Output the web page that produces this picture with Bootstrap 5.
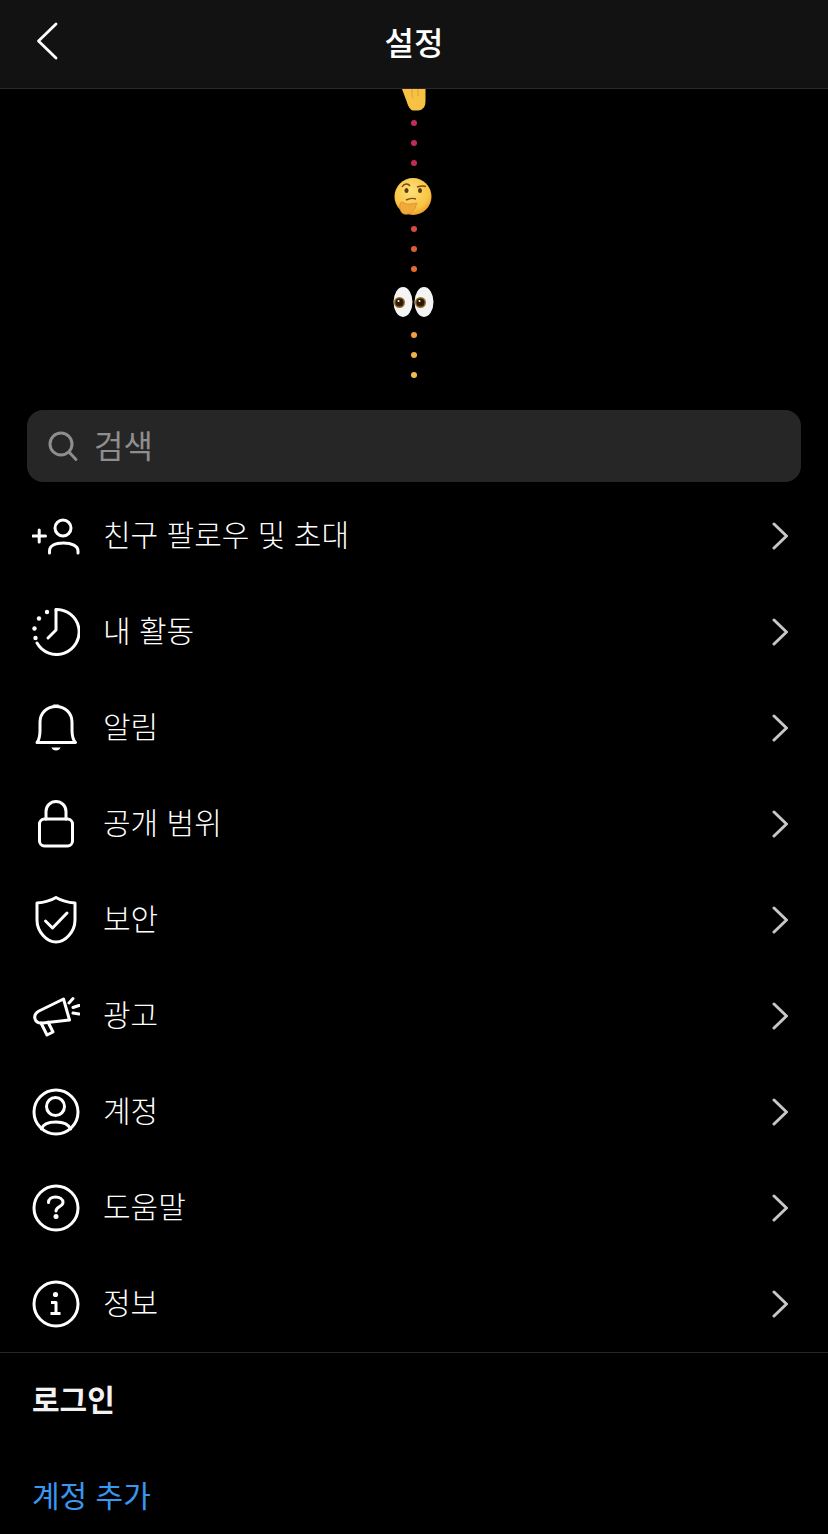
<!DOCTYPE html>
<html lang="ko">
<head>
    <meta charset="UTF-8">
    <meta name="viewport" content="width=device-width, initial-scale=1.0">
    <title>설정</title>
    <link href="https://cdn.jsdelivr.net/npm/bootstrap@5.3.0/dist/css/bootstrap.min.css" rel="stylesheet">
    <style>
        body {
            font-family: "Noto Sans CJK KR", "Noto Sans", sans-serif;
            background-color: #000;
            color: #fff;
            width: 828px;
            height: 1534px;
            overflow: hidden;
        }
        .top-bar {
            height: 89px;
            padding: 0 36px 6px;
            background-color: #121212;
            border-bottom: 1px solid #2a2a2a;
        }
        .top-title {
            font-size: 32px;
            font-weight: 500;
            line-height: 44px;
            margin: 0;
        }
        .hero-strip {
            height: 321px;
            overflow: hidden;
        }
        .hero-dots {
            gap: 14px;
        }
        .hero-dot {
            width: 6px;
            height: 6px;
            border-radius: 50%;
        }
        .hero-hand {
            margin-bottom: 9px;
        }
        .hero-think {
            margin: 11px 0 9px;
        }
        .hero-eyes {
            margin: 14px 0;
        }
        .search-box {
            height: 72px;
            margin: 0 27px 6px;
            padding: 0 0 5px 20px;
            gap: 15px;
            background-color: #262626;
            border-radius: 16px;
            color: #8e8e8e;
            font-size: 32px;
        }
        .search-box svg {
            margin-top: 5px;
        }
        .settings-list {
            --bs-list-group-bg: transparent;
            --bs-list-group-color: #fff;
            --bs-list-group-border-width: 0;
            --bs-list-group-item-padding-x: 32px;
            --bs-list-group-item-padding-y: 0;
        }
        .setting-row {
            height: 96px;
            gap: 23px;
            font-size: 30px;
            font-weight: 300;
            padding-right: 39px;
        }
        .setting-row svg {
            flex-shrink: 0;
        }
        .setting-label {
            flex-grow: 1;
            line-height: 44px;
            margin-bottom: 6px;
        }
        .login-zone {
            border-top: 1px solid #262626;
        }
        .login-row {
            height: 96px;
            padding: 0 32px 6px;
        }
        .login-head {
            font-size: 30px;
            font-weight: 700;
            color: #f2f2f2;
            margin: 0;
        }
        .login-add {
            font-size: 30px;
            color: #3897f0;
            text-decoration: none;
        }
        .ico {
            fill: none;
            stroke: #fff;
            stroke-width: 3;
            stroke-linecap: round;
            stroke-linejoin: round;
        }
        .ico-fill {
            fill: #fff;
            stroke: none;
        }
    </style>
</head>
<body>
    <header class="top-bar d-flex align-items-center justify-content-between">
        <svg width="24" height="40" viewBox="0 0 24 40"><path class="ico" d="M20 3 L2.5 20 L20 37" style="stroke-width:2.8"/></svg>
        <h1 class="top-title">설정</h1>
        <div style="width:24px"></div>
    </header>

    <div class="hero-strip d-flex flex-column align-items-center">
        <svg class="hero-hand" width="24" height="22" viewBox="0 0 24 22">
            <path d="M0 0 H23.5 V12 C23.5 18 21 21 16 21.5 H11 C8 21 6 17 4.5 12 Z" fill="#f7c244"/>
            <path d="M10 0 C9.5 4 10 7 11 9 M16 0 V7" stroke="#e09f2c" stroke-width="1" fill="none"/>
        </svg>
        <div class="hero-dots d-flex flex-column">
            <i class="hero-dot" style="background:#c32a62"></i>
            <i class="hero-dot" style="background:#c22b5c"></i>
            <i class="hero-dot" style="background:#c02c55"></i>
        </div>
        <svg class="hero-think" width="40" height="40" viewBox="0 0 40 40">
            <defs>
                <radialGradient id="faceGrad" cx="45%" cy="35%" r="70%">
                    <stop offset="0" stop-color="#fde07a"/>
                    <stop offset="0.7" stop-color="#f9c443"/>
                    <stop offset="1" stop-color="#e9932a"/>
                </radialGradient>
            </defs>
            <circle cx="19" cy="19.5" r="18.5" fill="url(#faceGrad)"/>
            <path d="M8 10 C10 6.5 14 6 16 9" fill="none" stroke="#7a4a12" stroke-width="1.4"/>
            <path d="M23 10 C26 9 29 8.5 32 9.5" fill="none" stroke="#7a4a12" stroke-width="1.4"/>
            <ellipse cx="12.5" cy="13.5" rx="2" ry="2.6" fill="#5a3a10"/>
            <ellipse cx="26" cy="13.5" rx="2" ry="2.6" fill="#5a3a10"/>
            <path d="M12 23 C16 21 19 21 22 22" fill="none" stroke="#7a4a12" stroke-width="1.4"/>
            <path d="M6 27 C7 24 9 25 10 26 C13 28 18 27 22 26 C24 26 23 28 21 29 C23 30 21 32 19 33 C18 36 14 38 10 37 C7 36 5 32 6 27 Z" fill="#f2a93b" stroke="#d98a25" stroke-width="0.7"/>
        </svg>
        <div class="hero-dots d-flex flex-column">
            <i class="hero-dot" style="background:#d64a3f"></i>
            <i class="hero-dot" style="background:#df5d36"></i>
            <i class="hero-dot" style="background:#e56b2e"></i>
        </div>
        <svg class="hero-eyes" width="42" height="32" viewBox="0 0 42 32">
            <ellipse cx="10" cy="16" rx="9.5" ry="15" fill="#f4f4f4"/>
            <ellipse cx="31" cy="16" rx="9.5" ry="15" fill="#f4f4f4"/>
            <circle cx="6.5" cy="16.5" r="5.5" fill="#9a6c1e"/>
            <circle cx="6.5" cy="16.5" r="4" fill="#2b1a0c"/>
            <circle cx="5.5" cy="15" r="1" fill="#fff"/>
            <circle cx="27.5" cy="16.5" r="5.5" fill="#9a6c1e"/>
            <circle cx="27.5" cy="16.5" r="4" fill="#2b1a0c"/>
            <circle cx="26.5" cy="15" r="1" fill="#fff"/>
        </svg>
        <div class="hero-dots d-flex flex-column">
            <i class="hero-dot" style="background:#ee9f3f"></i>
            <i class="hero-dot" style="background:#efb04a"></i>
            <i class="hero-dot" style="background:#f2bc52"></i>
        </div>
    </div>

    <div class="search-box d-flex align-items-center">
        <svg width="32" height="32" viewBox="0 0 32 32">
            <circle class="ico" cx="14" cy="14" r="11" style="stroke:#8e8e8e"/>
            <path class="ico" d="M22 22 L29 29.5" style="stroke:#8e8e8e"/>
        </svg>
        <span>검색</span>
    </div>

    <div class="list-group settings-list rounded-0">
        <a class="list-group-item setting-row d-flex align-items-center" href="#">
            <svg width="48" height="48" viewBox="0 0 48 48">
                <circle class="ico" cx="31" cy="16" r="8"/>
                <path class="ico" d="M17.5 41 V39 C17.5 34 23 31 31.5 31 S46 34 46 39 V41"/>
                <path class="ico" d="M1 24 H13.5 M7.2 18 V30"/>
            </svg>
            <span class="setting-label">친구 팔로우 및 초대</span>
            <svg width="18" height="28" viewBox="0 0 18 28"><path class="ico" d="M3 2 L15.5 14 L3 26" style="stroke:#c7c7c7"/></svg>
        </a>
        <a class="list-group-item setting-row d-flex align-items-center" href="#">
            <svg width="48" height="48" viewBox="0 0 48 48">
                <path class="ico" d="M24 1.5 A22.5 22.5 0 1 1 5 35"/>
                <path class="ico" d="M24 1.5 V22 L16 30"/>
                <circle class="ico-fill" cx="15" cy="4" r="2.2"/>
                <circle class="ico-fill" cx="7" cy="10.5" r="2.2"/>
                <circle class="ico-fill" cx="2.5" cy="20.5" r="2.2"/>
                <circle class="ico-fill" cx="3.5" cy="30" r="2.2"/>
            </svg>
            <span class="setting-label">내 활동</span>
            <svg width="18" height="28" viewBox="0 0 18 28"><path class="ico" d="M3 2 L15.5 14 L3 26" style="stroke:#c7c7c7"/></svg>
        </a>
        <a class="list-group-item setting-row d-flex align-items-center" href="#">
            <svg width="48" height="48" viewBox="0 0 48 48">
                <path class="ico" d="M5 38.5 C7 36 8 32 8 26 V18 C8 9 15 2.5 24 2.5 S40 9 40 18 V26 C40 32 41 36 43.5 38.5 Z"/>
                <path class="ico-fill" d="M21 0.5 H27 L25.5 3 H22.5 Z"/>
                <path class="ico-fill" d="M19.5 43.5 H28.5 C27.5 47.5 20.5 47.5 19.5 43.5 Z"/>
            </svg>
            <span class="setting-label">알림</span>
            <svg width="18" height="28" viewBox="0 0 18 28"><path class="ico" d="M3 2 L15.5 14 L3 26" style="stroke:#c7c7c7"/></svg>
        </a>
        <a class="list-group-item setting-row d-flex align-items-center" href="#">
            <svg width="48" height="48" viewBox="0 0 48 48">
                <rect class="ico" x="7.5" y="19" width="33" height="27" rx="5"/>
                <path class="ico" d="M14 19 V11.5 A10 10 0 0 1 34 11.5 V19"/>
            </svg>
            <span class="setting-label">공개 범위</span>
            <svg width="18" height="28" viewBox="0 0 18 28"><path class="ico" d="M3 2 L15.5 14 L3 26" style="stroke:#c7c7c7"/></svg>
        </a>
        <a class="list-group-item setting-row d-flex align-items-center" href="#">
            <svg width="48" height="48" viewBox="0 0 48 48">
                <path class="ico" d="M24 1.5 C29 4.5 36 6.5 43 7 V24 C43 36 33 46 24 46 S5 36 5 24 V7 C12 6.5 19 4.5 24 1.5 Z"/>
                <path class="ico" d="M13.5 25 L20.5 32 L35 17"/>
            </svg>
            <span class="setting-label">보안</span>
            <svg width="18" height="28" viewBox="0 0 18 28"><path class="ico" d="M3 2 L15.5 14 L3 26" style="stroke:#c7c7c7"/></svg>
        </a>
        <a class="list-group-item setting-row d-flex align-items-center" href="#">
            <svg width="48" height="48" viewBox="0 0 48 48">
                <path class="ico" d="M7 19 L31.5 7 L37.5 28 L11 31 C2 32 0 23 7 19 Z"/>
                <path class="ico" d="M9 31 L15 43 L21 40 L16 30"/>
                <path class="ico" d="M37 11 L41 6.5 M41 15.5 L47 13.5 M41 21 L47 22"/>
            </svg>
            <span class="setting-label">광고</span>
            <svg width="18" height="28" viewBox="0 0 18 28"><path class="ico" d="M3 2 L15.5 14 L3 26" style="stroke:#c7c7c7"/></svg>
        </a>
        <a class="list-group-item setting-row d-flex align-items-center" href="#">
            <svg width="48" height="48" viewBox="0 0 48 48">
                <circle class="ico" cx="24" cy="24" r="22"/>
                <circle class="ico" cx="23.5" cy="18.5" r="9"/>
                <path class="ico" d="M9.5 41 C11 36 17 34 24 34 S36.5 36 38.5 41"/>
            </svg>
            <span class="setting-label">계정</span>
            <svg width="18" height="28" viewBox="0 0 18 28"><path class="ico" d="M3 2 L15.5 14 L3 26" style="stroke:#c7c7c7"/></svg>
        </a>
        <a class="list-group-item setting-row d-flex align-items-center" href="#">
            <svg width="48" height="48" viewBox="0 0 48 48">
                <circle class="ico" cx="24" cy="24" r="22"/>
                <path class="ico" d="M16.5 18.5 C16.5 15 19.5 13 23.5 13 S31 15 31 18.5 C31 22.5 24 22.5 24 27"/>
                <circle class="ico-fill" cx="24" cy="32.5" r="2.5"/>
            </svg>
            <span class="setting-label">도움말</span>
            <svg width="18" height="28" viewBox="0 0 18 28"><path class="ico" d="M3 2 L15.5 14 L3 26" style="stroke:#c7c7c7"/></svg>
        </a>
        <a class="list-group-item setting-row d-flex align-items-center" href="#">
            <svg width="48" height="48" viewBox="0 0 48 48">
                <circle class="ico" cx="24" cy="24" r="22"/>
                <circle class="ico-fill" cx="23.5" cy="14.5" r="2.6"/>
                <path class="ico" d="M19 22.5 H24 V33 M18.5 33.5 H28.5" style="stroke-linecap:butt"/>
            </svg>
            <span class="setting-label">정보</span>
            <svg width="18" height="28" viewBox="0 0 18 28"><path class="ico" d="M3 2 L15.5 14 L3 26" style="stroke:#c7c7c7"/></svg>
        </a>
    </div>

    <div class="login-zone">
        <div class="login-row d-flex align-items-center">
            <h2 class="login-head">로그인</h2>
        </div>
        <div class="login-row d-flex align-items-center">
            <a class="login-add" href="#">계정 추가</a>
        </div>
    </div>

    <script src="https://cdn.jsdelivr.net/npm/bootstrap@5.3.0/dist/js/bootstrap.bundle.min.js"></script>
</body>
</html>
